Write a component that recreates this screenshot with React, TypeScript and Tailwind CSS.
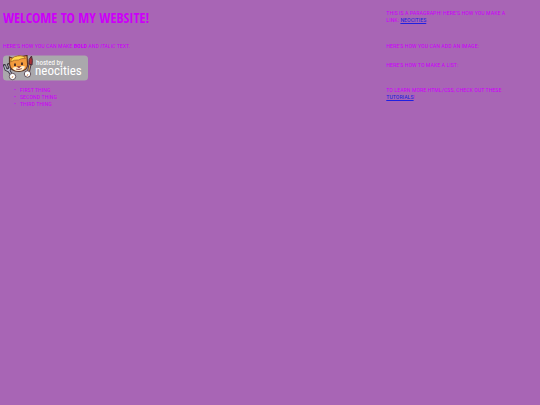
import React from "react";

function HostedBadge() {
  return (
    <svg viewBox="0 0 85 26" className="block h-[26px] w-[85px]" role="img" aria-label="Hosted by Neocities">
      <rect x="0" y="0.500" width="85" height="25" rx="3.500" fill="#aaa8ac" />
      <path d="M1.500 10.500l1.500 4 3 1.500M5.500 9.500l1.500 3-1 3M5 14l4 7" stroke="#3b3442" strokeWidth="3" fill="none" strokeLinecap="round" />
      <path d="M1.500 10.500l1.500 4 3 1.500M5.500 9.500l1.500 3-1 3M5 14l4 7" stroke="#b9bfd0" strokeWidth="1.200" fill="none" />
      <path d="M6.500 9l0-7 4 1.500q4-3.500 8-2l5.500-1 0.500 7.500q1 8-8.500 8.500-9 0-9.500-7.500z" fill="#f29a3d" stroke="#583326" strokeWidth="1.200" />
      <path d="M7.500 7q1-5.500 7-6 6-1 8 2.500-4-0.500-7 1.500-4-0.500-8 2z" fill="#ffd84f" stroke="#a8642a" strokeWidth="0.800" />
      <path d="M9.500 13q3-2 6 0 3-3 6.500-1.500-1 4.500-6.500 4.500-4.500 0-6-3z" fill="#fff0d5" />
      <path d="M12 8.500v2.500M19 7.500v2.500" stroke="#352027" strokeWidth="1.700" />
      <path d="M14.500 11.500h3l-1.500 1.500zM13 14q3 1.500 6-0.500" fill="#cc5960" stroke="#703c35" strokeWidth="0.600" />
      <path d="M25 19l2.500-12" stroke="#493044" strokeWidth="3" />
      <path d="M25 19l2.500-12" stroke="#d9a65b" strokeWidth="1.200" />
      <path d="M26 9q-1-5 2.500-8 1.500 4 0.500 9z" fill="#a92f35" stroke="#4a2938" strokeWidth="1" />
      <circle cx="9.500" cy="21.500" r="3.200" fill="#fff" stroke="#55424e" strokeWidth="0.900" />
      <circle cx="24.500" cy="19" r="3.200" fill="#fff" stroke="#55424e" strokeWidth="0.900" />
      <path d="M9 23l1-2M24 21l1-2" stroke="#d99d70" strokeWidth="1" />
      <text x="33" y="10" fill="#fff" className="font-['Roboto_Condensed','Open_Sans',sans-serif] text-[7px]">hosted by</text>
      <text x="32" y="20" fill="#fff" className="font-['Roboto_Condensed','Open_Sans',sans-serif] text-[13px]">neocities</text>
    </svg>
  );
}

const things = ["FIRST THING", "SECOND THING", "THIRD THING"];

export default function App() {
  return (
    <main className="min-h-screen bg-[#a865b5] font-['Roboto_Condensed','Roboto',sans-serif] text-[6px] leading-[7px] text-[#cc00f8]">
      <div className="grid grid-cols-[5fr_2fr] items-start gap-x-1 pr-[2px] pl-[3px] pt-[9px]">
        <h1 className="font-['Open_Sans_Condensed','Roboto_Condensed',sans-serif] text-[14px] leading-[17px] font-bold">WELCOME TO MY WEBSITE!</h1>
        <p className="pr-5">
          THIS IS A PARAGRAPH! HERE'S HOW YOU MAKE A LINK: <a href="https://neocities.org" className="text-[#2020e0] underline">NEOCITIES</a>.
        </p>
        <p className="pt-4">HERE'S HOW YOU CAN MAKE <strong>BOLD</strong> AND <em>ITALIC</em> TEXT.</p>
        <p className="pt-4">HERE'S HOW YOU CAN ADD AN IMAGE:</p>
        <div className="pt-[6px]"><HostedBadge /></div>
        <p className="pt-3">HERE'S HOW TO MAKE A LIST:</p>
        <ul className="pt-[5px] pl-[10px]">
          {things.map((thing) => (
            <li key={thing} className="flex before:w-[7px] before:pl-px before:content-['•']">{thing}</li>
          ))}
        </ul>
        <p className="pt-[5px] pr-5">
          TO LEARN MORE HTML/CSS, CHECK OUT THESE <a href="https://neocities.org/tutorials" className="text-[#2020e0] underline">TUTORIALS</a>!
        </p>
      </div>
    </main>
  );
}
